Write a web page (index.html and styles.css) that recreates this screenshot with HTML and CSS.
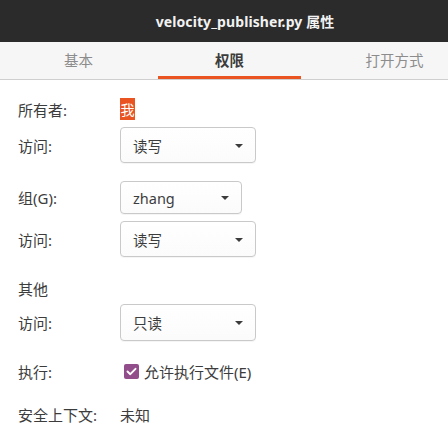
FILE: index.html
```html
<!DOCTYPE html>
<html lang="zh">
<head>
<meta charset="utf-8">
<link rel="stylesheet" href="styles.css">
</head>
<body>
<div class="window">
  <header class="titlebar">velocity_publisher.py 属性</header>
  <nav class="tabs">
    <div class="tab tab1">基本</div>
    <div class="tab tab2 active">权限</div>
    <div class="tab tab3">打开方式</div>
  </nav>
  <main class="content">
    <div class="row r-owner"><span class="label">所有者:</span><span class="owner">我</span></div>
    <div class="row r-acc1"><span class="label">访问:</span><div class="combo wide"><span>读写</span><i class="arrow"></i></div></div>
    <div class="row r-group"><span class="label">组(G):</span><div class="combo narrow"><span>zhang</span><i class="arrow"></i></div></div>
    <div class="row r-acc2"><span class="label">访问:</span><div class="combo wide"><span>读写</span><i class="arrow"></i></div></div>
    <div class="row r-other"><span class="label">其他</span></div>
    <div class="row r-acc3"><span class="label">访问:</span><div class="combo wide"><span>只读</span><i class="arrow"></i></div></div>
    <div class="row r-exec"><span class="label">执行:</span>
      <label class="check"><span class="box"><svg width="11" height="9" viewBox="0 0 11 9"><path d="M1.5 4.5 L4.3 7.2 L9.5 1.8" fill="none" stroke="#fff" stroke-width="1.9" stroke-linecap="round" stroke-linejoin="round"/></svg></span><span>允许执行文件(E)</span></label>
    </div>
    <div class="row r-sec"><span class="label">安全上下文:</span><span class="value">未知</span></div>
  </main>
</div>
</body>
</html>
```

FILE: styles.css
```css
* { box-sizing: border-box; }
html, body { margin: 0; padding: 0; }
body {
  width: 448px;
  height: 439px;
  overflow: hidden;
  background: #ffffff;
  font-family: "Noto Sans", "Noto Sans CJK SC", sans-serif;
  color: #3c3c3c;
}
.window { display: flex; flex-direction: column; height: 439px; }
.titlebar {
  height: 42px;
  background: #2c2b2b;
  color: #f2f2f2;
  font-weight: bold;
  font-size: 14px;
  display: flex;
  align-items: center;
  justify-content: center;
  padding-left: 42px;
  letter-spacing: 0.1px;
}
.tabs {
  height: 38px;
  background: #f6f6f6;
  border-bottom: 1px solid #cfcfcf;
  display: flex;
  overflow: hidden;
  padding-left: 7px;
  font-size: 14.5px;
}
.tab {
  height: 37px;
  display: flex;
  align-items: center;
  justify-content: center;
  color: #8c8c8c;
  flex: none;
  padding-bottom: 2px;
}
.tab1 { width: 143px; }
.tab2 { width: 143px; margin-left: 8px; }
.tab3 { width: 173px; margin-left: 7px; }
.tab.active {
  color: #3c3c3c;
  font-weight: bold;
  border-bottom: 3px solid #e95420;
  padding-bottom: 0;
}
.content {
  display: flex;
  flex-direction: column;
  padding-left: 18px;
  font-size: 15px;
}
.row { display: flex; align-items: center; flex: none; }
.label { width: 102px; flex: none; }
.r-owner { margin-top: 18px; height: 22px; }
.r-acc1 { margin-top: 7px; height: 36px; }
.r-group { margin-top: 18px; height: 33px; }
.r-acc2 { margin-top: 7px; height: 36px; }
.r-other { margin-top: 21px; height: 20px; }
.r-acc3 { margin-top: 6px; height: 37px; }
.r-exec { margin-top: 20px; height: 20px; }
.r-sec { margin-top: 23px; height: 20px; }
.owner {
  background: #e95420;
  color: #ffffff;
  width: 15px;
  height: 22px;
  display: flex;
  align-items: center;
  justify-content: center;
  font-size: 14px;
}
.combo {
  height: 100%;
  border: 1px solid #c9c9c9;
  border-radius: 4px;
  background: linear-gradient(#ffffff, #fbfbfb);
  display: flex;
  align-items: center;
  justify-content: space-between;
  padding: 0 12px 0 12px;
  box-shadow: 0 1px 0 rgba(0,0,0,0.04);
  font-size: 14.5px;
}
.combo.wide { width: 136px; }
.combo.narrow { width: 122px; }
.arrow {
  width: 0; height: 0;
  border-left: 4px solid transparent;
  border-right: 4px solid transparent;
  border-top: 4px solid #3c3c3c;
  margin-top: 1px;
}
.check { display: flex; align-items: center; margin-left: 4px; }
.box {
  width: 15px; height: 15px;
  background: #924d8b;
  border-radius: 2px;
  display: flex;
  align-items: center;
  justify-content: center;
  margin-right: 5px;
}
.value { }
```
